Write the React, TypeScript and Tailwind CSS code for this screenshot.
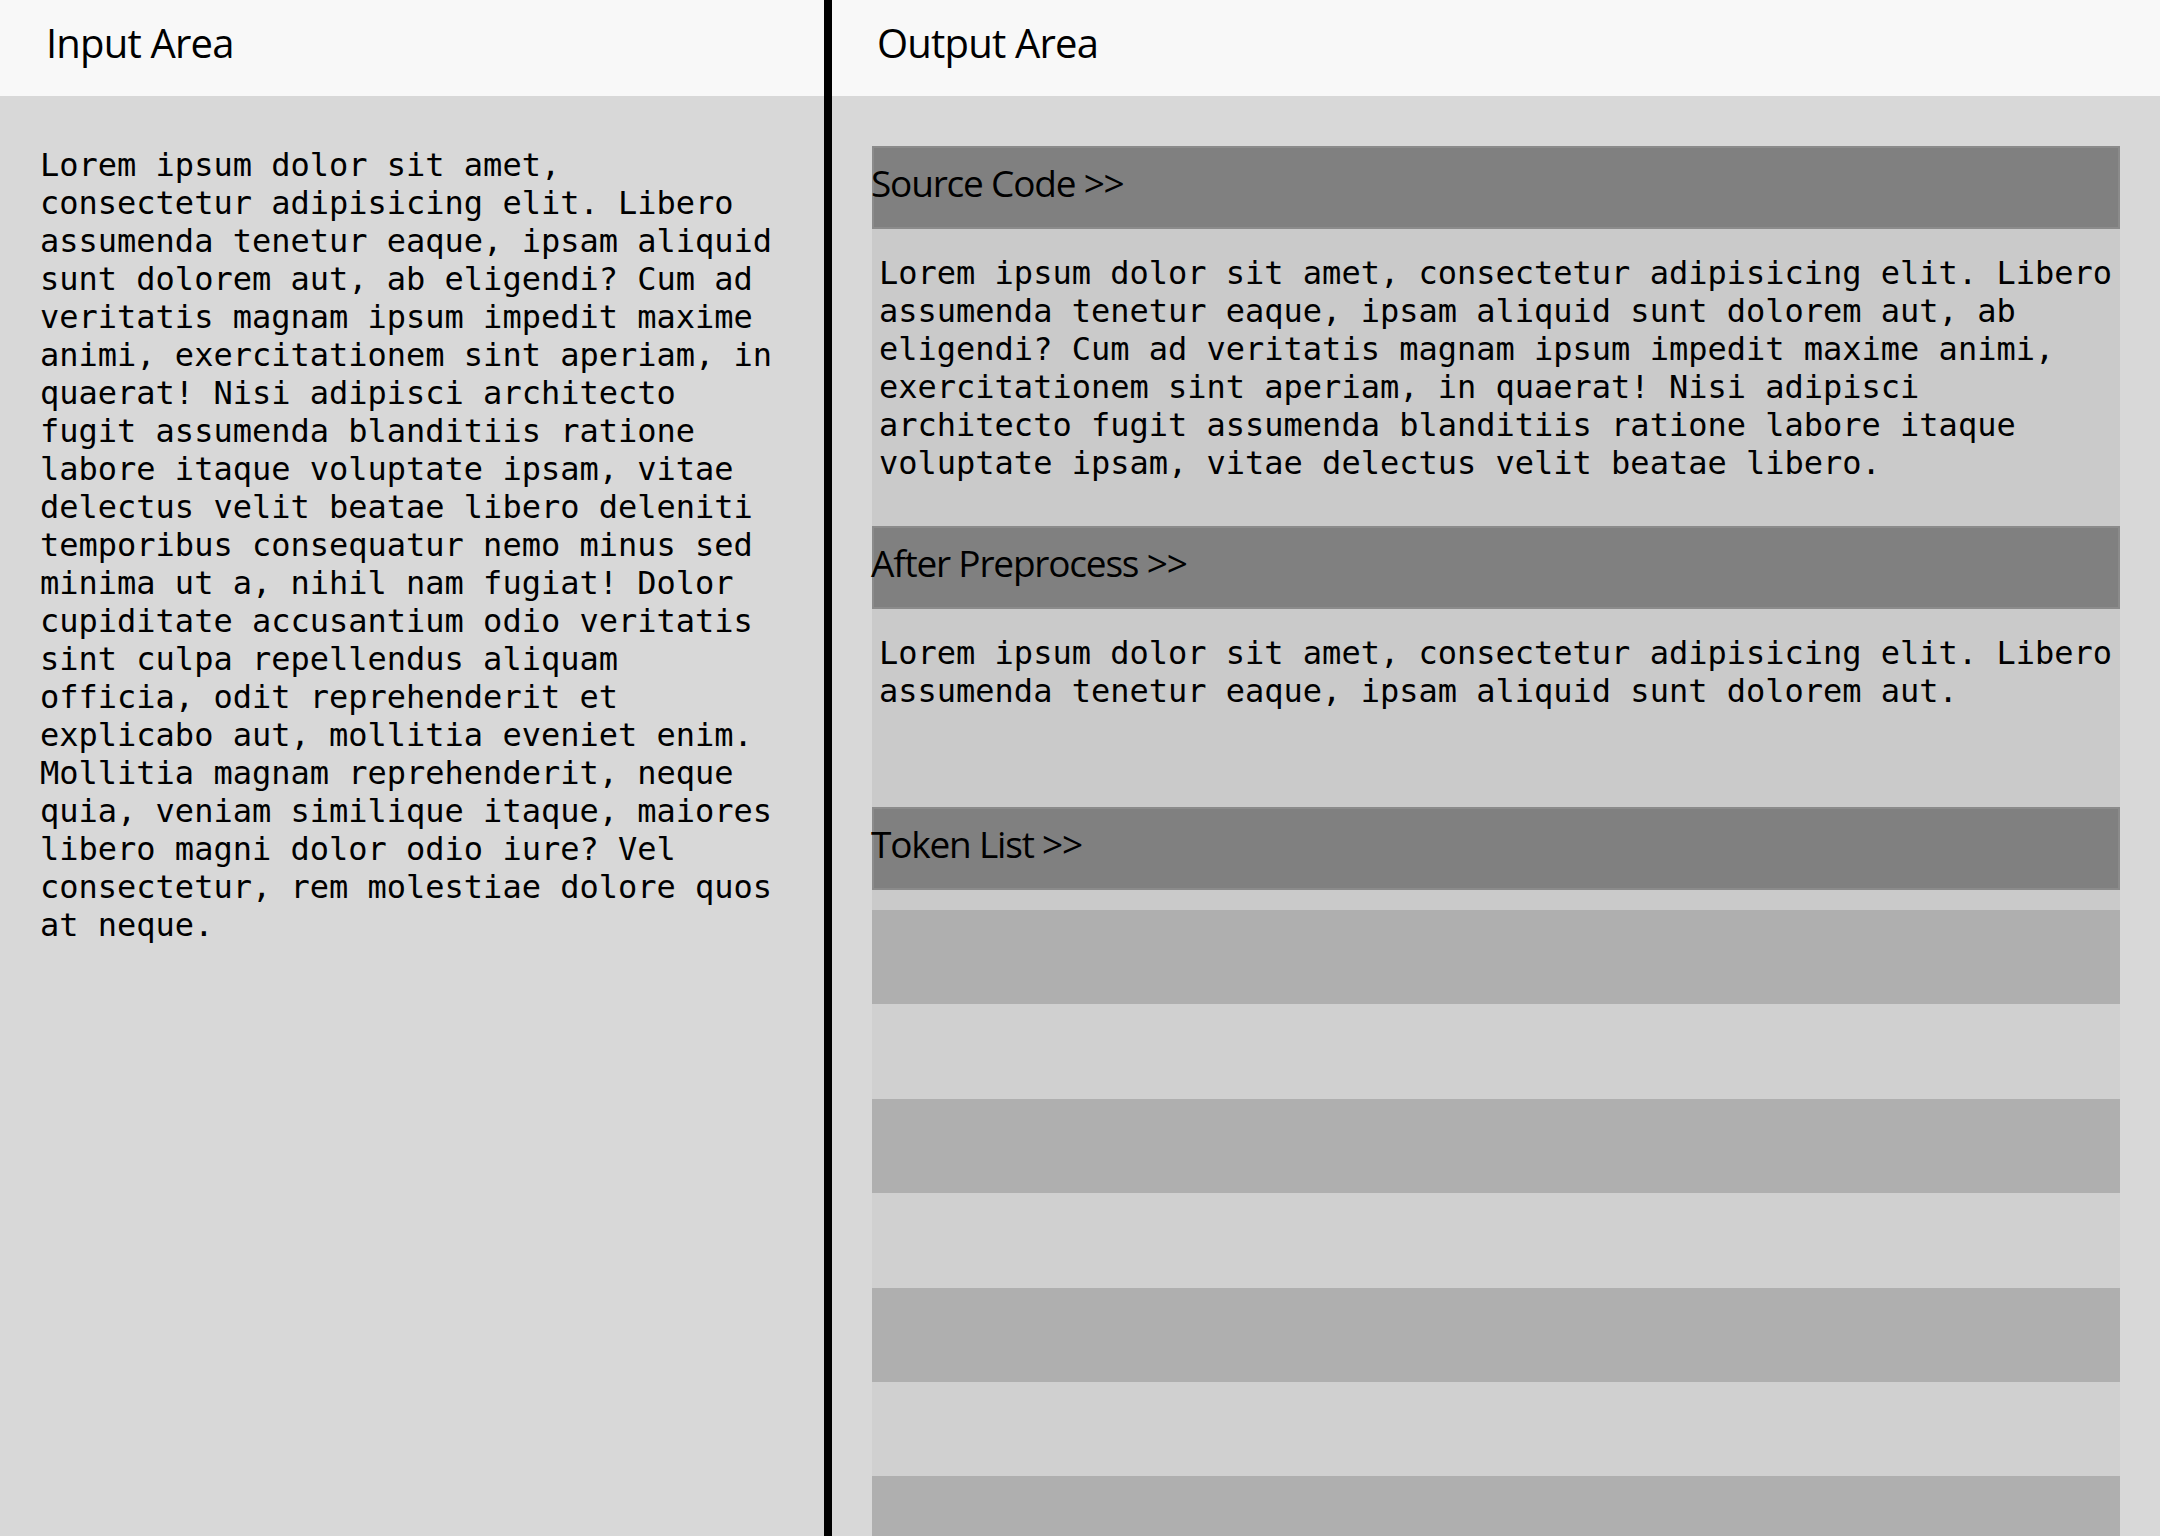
import React from "react";

const leftLines = [
  "Lorem ipsum dolor sit amet,",
  "consectetur adipisicing elit. Libero",
  "assumenda tenetur eaque, ipsam aliquid",
  "sunt dolorem aut, ab eligendi? Cum ad",
  "veritatis magnam ipsum impedit maxime",
  "animi, exercitationem sint aperiam, in",
  "quaerat! Nisi adipisci architecto",
  "fugit assumenda blanditiis ratione",
  "labore itaque voluptate ipsam, vitae",
  "delectus velit beatae libero deleniti",
  "temporibus consequatur nemo minus sed",
  "minima ut a, nihil nam fugiat! Dolor",
  "cupiditate accusantium odio veritatis",
  "sint culpa repellendus aliquam",
  "officia, odit reprehenderit et",
  "explicabo aut, mollitia eveniet enim.",
  "Mollitia magnam reprehenderit, neque",
  "quia, veniam similique itaque, maiores",
  "libero magni dolor odio iure? Vel",
  "consectetur, rem molestiae dolore quos",
  "at neque.",
];

const sourceLines = [
  "Lorem ipsum dolor sit amet, consectetur adipisicing elit. Libero",
  "assumenda tenetur eaque, ipsam aliquid sunt dolorem aut, ab",
  "eligendi? Cum ad veritatis magnam ipsum impedit maxime animi,",
  "exercitationem sint aperiam, in quaerat! Nisi adipisci",
  "architecto fugit assumenda blanditiis ratione labore itaque",
  "voluptate ipsam, vitae delectus velit beatae libero.",
];

const preLines = [
  "Lorem ipsum dolor sit amet, consectetur adipisicing elit. Libero",
  "assumenda tenetur eaque, ipsam aliquid sunt dolorem aut.",
];

const mono = "font-['DejaVu_Sans_Mono',monospace] text-[32px] leading-[38px] text-black whitespace-pre";
const sans = "font-['Open_Sans',sans-serif]";

function Lines({ lines }: { lines: string[] }) {
  return (
    <div className={mono}>
      {lines.map((l, i) => (
        <div key={i}>{l}</div>
      ))}
    </div>
  );
}

function SectionHeader({ title }: { title: string }) {
  return (
    <div className="h-[83px] box-border border-2 border-[#8b8b8b] bg-[#808080] flex items-center pb-[10px]">
      <span className={`${sans} -ml-[3px] text-[37px] tracking-[-1.2px] text-black leading-none`}>{title}</span>
    </div>
  );
}

export default function App() {
  const rows = [0, 1, 2, 3, 4, 5, 6];
  return (
    <div className="flex h-screen w-full overflow-hidden bg-[#d8d8d8]">
      {/* Left pane */}
      <div className="w-[824px] shrink-0 flex flex-col">
        <div className="h-[96px] bg-[#f8f8f8] flex items-center pl-[46px] pb-[10px]">
          <span className={`${sans} text-[40px] tracking-[-0.8px] text-black leading-none`}>Input Area</span>
        </div>
        <div className="flex-1 pl-[40px] pt-[50px]">
          <Lines lines={leftLines} />
        </div>
      </div>

      {/* Divider */}
      <div className="w-[8px] shrink-0 bg-black" />

      {/* Right pane */}
      <div className="flex-1 flex flex-col min-w-0">
        <div className="h-[96px] shrink-0 bg-[#f8f8f8] flex items-center pl-[45px] pb-[10px]">
          <span className={`${sans} text-[40px] tracking-[-0.8px] text-black leading-none`}>Output Area</span>
        </div>
        <div className="flex-1 px-10 pt-[50px] flex flex-col">
          <SectionHeader title="Source Code >>" />
          <div className="h-[297px] bg-[#cacaca] pl-[7px] pt-[25px]">
            <Lines lines={sourceLines} />
          </div>
          <SectionHeader title="After Preprocess >>" />
          <div className="h-[198px] bg-[#cacaca] pl-[7px] pt-[25px]">
            <Lines lines={preLines} />
          </div>
          <SectionHeader title="Token List >>" />
          <div className="bg-[#cacaca] pt-[20px] flex flex-col">
            {rows.map((r) => (
              <div
                key={r}
                className={r % 2 === 0 ? "h-[94.4px] shrink-0 bg-[#afafaf]" : "h-[94.4px] shrink-0 bg-[#d0d0d0]"}
              />
            ))}
          </div>
        </div>
      </div>
    </div>
  );
}
